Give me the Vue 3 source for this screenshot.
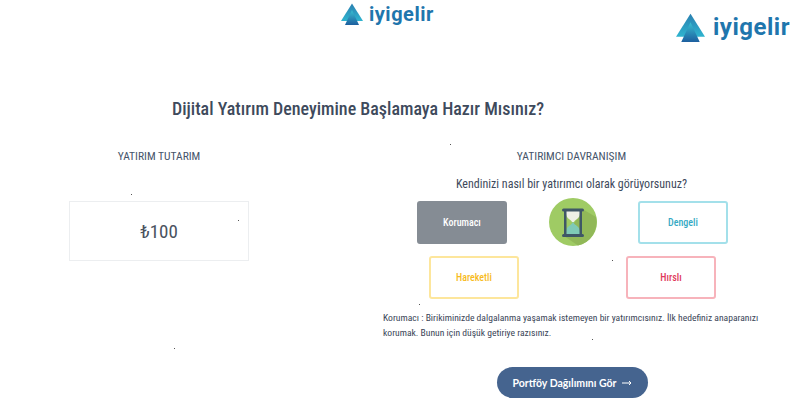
<script setup>
import { ref } from 'vue';

const selected = ref('Korumacı');

const topRow = [
  { name: 'Korumacı', tone: 'grey' },
  { name: 'Dengeli', tone: 'teal' }
];
const bottomRow = [
  { name: 'Hareketli', tone: 'yellow' },
  { name: 'Hırslı', tone: 'red' }
];

// tiny specks left over in the original picture
const specks = [
  { x: 450, y: 144 }, { x: 131, y: 194 }, { x: 238, y: 220 }, { x: 174, y: 348 },
  { x: 612, y: 260 }, { x: 419, y: 304 }, { x: 592, y: 339 }
];
</script>

<template>
  <div class="page">
    <header class="top">
      <div class="logo">
        <svg class="mark" viewBox="0 0 44 44">
          <defs>
            <linearGradient id="lg1" x1="0" y1="0" x2="0" y2="1">
              <stop offset="0" stop-color="#2a7fb0" />
              <stop offset="1" stop-color="#2fb4cf" />
            </linearGradient>
            <linearGradient id="lg2" x1="0" y1="0" x2="0" y2="1">
              <stop offset="0" stop-color="#39c0d2" />
              <stop offset="1" stop-color="#1d5f9f" />
            </linearGradient>
          </defs>
          <polygon points="22,1 44,36 0,36" fill="url(#lg1)" />
          <polygon points="22,14 36,44 8,44" fill="url(#lg2)" />
        </svg>
        <span class="word">iyigelir</span>
      </div>
    </header>

    <div class="logo logo-big">
      <svg class="mark" viewBox="0 0 44 44">
        <polygon points="22,1 44,36 0,36" fill="url(#lg1)" />
        <polygon points="22,14 36,44 8,44" fill="url(#lg2)" />
      </svg>
      <span class="word">iyigelir</span>
    </div>

    <h1 class="title">Dijital Yatırım Deneyimine Başlamaya Hazır Mısınız?</h1>

    <main class="cols">
      <section class="amount">
        <h2 class="heading">YATIRIM TUTARIM</h2>
        <div class="amount-box">₺100</div>
      </section>

      <section class="behaviour">
        <h2 class="heading">YATIRIMCI DAVRANIŞIM</h2>
        <p class="question">Kendinizi nasıl bir yatırımcı olarak görüyorsunuz?</p>

        <div class="options row-top">
          <button class="option" :class="topRow[0].tone" @click="selected = topRow[0].name">{{ topRow[0].name }}</button>
          <svg class="glass" viewBox="0 0 48 48">
            <circle cx="24" cy="24" r="24" fill="#9fcb64" />
            <path d="M35 12 L47 19 A24 24 0 0 1 29 47.5 L15 38 Z" fill="#91b858" />
            <path d="M17 13 H31 V15 C31 21 26 21 25 24 H23 C22 21 17 21 17 15 Z" fill="#eef0e6" />
            <path d="M17 36 V34 C17 28 22 28 24 24 C26 28 31 28 31 34 V36 Z" fill="#7fcab6" />
            <rect x="15" y="12" width="2.5" height="26" fill="#3f5766" />
            <rect x="30.5" y="12" width="2.5" height="26" fill="#3f5766" />
            <rect x="13" y="10.5" width="22" height="3" rx="1.5" fill="#3f5766" />
            <rect x="13" y="36" width="22" height="3" rx="1.5" fill="#3f5766" />
          </svg>
          <button class="option" :class="topRow[1].tone" @click="selected = topRow[1].name">{{ topRow[1].name }}</button>
        </div>

        <div class="options row-bottom">
          <button v-for="o in bottomRow" :key="o.name" class="option" :class="o.tone" @click="selected = o.name">{{ o.name }}</button>
        </div>

        <p class="desc">Korumacı : Birikiminizde dalgalanma yaşamak istemeyen bir yatırımcısınız. İlk hedefiniz anaparanızı korumak. Bunun için düşük getiriye razısınız.</p>

        <button class="cta">Portföy Dağılımını Gör
          <svg class="arrow" viewBox="0 0 10 6">
            <path d="M0 3 H9 M7 1 L9 3 L7 5" fill="none" stroke="#fff" stroke-width="1" />
          </svg>
        </button>
      </section>
    </main>

    <i v-for="s in specks" :key="s.x" class="speck" :style="{ left: s.x + 'px', top: s.y + 'px' }"></i>
  </div>
</template>

<style scoped>
.page {
  position: relative;
  width: 800px;
  height: 400px;
  overflow: hidden;
  background: #fff;
  font-family: Roboto, "Liberation Sans", sans-serif;
  font-stretch: 85%;
  color: #3f4a5a;
}

.top {
  display: flex;
  height: 62px;
  padding: 3px 0 0 341px;
  box-sizing: border-box;
}

.logo {
  display: flex;
  align-items: center;
  gap: 6px;
  height: 22px;
}

.mark {
  width: 22px;
  height: 22px;
}

.word {
  font-family: Roboto, sans-serif;
  font-stretch: 100%;
  font-size: 20px;
  font-weight: 700;
  letter-spacing: 0.5px;
  color: #1f76ad;
}

.logo-big {
  position: absolute;
  left: 676px;
  top: 13px;
  height: 28px;
  gap: 8px;
}

.logo-big .mark {
  width: 29px;
  height: 29px;
}

.logo-big .word {
  font-size: 24px;
}

.title {
  margin: 35px 0 0;
  padding-left: 172px;
  font-size: 18px;
  line-height: 24px;
  font-weight: 500;
  color: #3e4a5c;
}

.cols {
  display: grid;
  grid-template-columns: 180px 377px;
  column-gap: 134px;
  padding: 27px 0 0 69px;
}

.heading {
  margin: 0;
  font-size: 11.5px;
  line-height: 16px;
  font-weight: 400;
  font-stretch: 75%;
  text-align: center;
  color: #46546a;
}

.amount-box {
  margin-top: 37px;
  height: 60px;
  display: flex;
  align-items: center;
  justify-content: center;
  border: 1px solid #eceef0;
  box-sizing: border-box;
  font-size: 19px;
  font-weight: 400;
  color: #4a5260;
}

.question {
  margin: 11px 0 0;
  font-size: 12px;
  line-height: 18px;
  font-stretch: 80%;
  text-align: center;
  color: #3e4a5c;
}

.options {
  display: flex;
  justify-content: space-between;
  align-items: center;
}

.row-top {
  margin: 5px 32px 0 34px;
}

.row-bottom {
  margin: 10px 44px 0 46px;
}

.glass {
  width: 48px;
  height: 48px;
}

.option {
  width: 90px;
  height: 43px;
  padding: 0;
  border: 2px solid;
  border-radius: 3px;
  background: #fff;
  font-family: inherit;
  font-stretch: 85%;
  font-size: 10px;
  font-weight: 500;
  cursor: pointer;
}

.grey { background: #858c94; border-color: #858c94; color: #fff; }
.teal { border-color: #a3e0ea; color: #35a9c4; }
.yellow { border-color: #fde69c; color: #f7bb1e; }
.red { border-color: #f7b3bb; color: #e0395a; }

.desc {
  margin: 11px 0 0;
  font-size: 9.6px;
  line-height: 15px;
  color: #3a4557;
}

.cta {
  display: flex;
  align-items: center;
  justify-content: center;
  gap: 6px;
  margin: 27px 0 0 114px;
  width: 151px;
  height: 31px;
  border: none;
  border-radius: 16px;
  background: #45648f;
  color: #fff;
  font-family: Lato, sans-serif;
  font-size: 10.5px;
  font-weight: 700;
  cursor: pointer;
}

.arrow {
  width: 10px;
  height: 6px;
}

.speck {
  position: absolute;
  width: 1px;
  height: 1px;
  background: #555;
}
</style>
